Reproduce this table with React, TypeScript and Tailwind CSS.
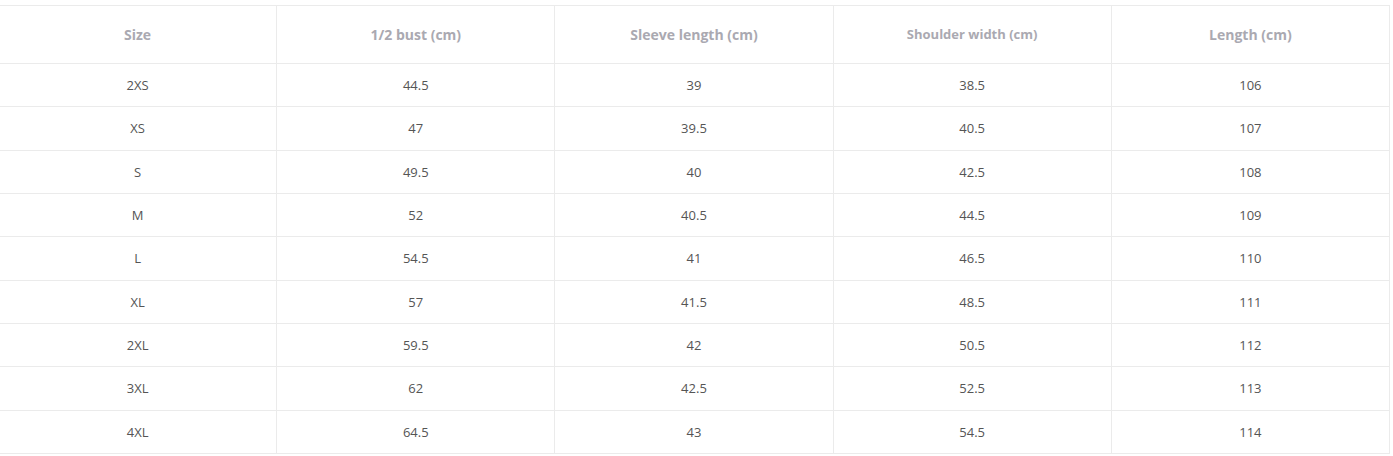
import React from 'react';

const headers = [
  { label: 'Size', size: 'text-[14px]' },
  { label: '1/2 bust (cm)', size: 'text-[14px]' },
  { label: 'Sleeve length (cm)', size: 'text-[14px]' },
  { label: 'Shoulder width (cm)', size: 'text-[13px]' },
  { label: 'Length (cm)', size: 'text-[14px]' },
];

const rows = [
  ['2XS', '44.5', '39', '38.5', '106'],
  ['XS', '47', '39.5', '40.5', '107'],
  ['S', '49.5', '40', '42.5', '108'],
  ['M', '52', '40.5', '44.5', '109'],
  ['L', '54.5', '41', '46.5', '110'],
  ['XL', '57', '41.5', '48.5', '111'],
  ['2XL', '59.5', '42', '50.5', '112'],
  ['3XL', '62', '42.5', '52.5', '113'],
  ['4XL', '64.5', '43', '54.5', '114'],
];

const App: React.FC = () => {
  return (
    <div className="w-[1393px] h-[456px] overflow-hidden bg-white pt-[5px] font-['Open_Sans',sans-serif]">
      <table className="-ml-[2px] w-[1392px] table-fixed border-collapse">
        <thead>
          <tr className="h-[58px]">
            {headers.map((h) => (
              <th
                key={h.label}
                className={`border border-[#ebebeb] ${h.size} font-bold text-[#aaa9b1] text-center align-middle`}
              >
                {h.label}
              </th>
            ))}
          </tr>
        </thead>
        <tbody>
          {rows.map((row) => (
            <tr key={row[0]} className="h-[43.33px]">
              {row.map((cell, i) => (
                <td
                  key={i}
                  className="border border-[#ebebeb] pt-px text-[13px] text-[#555555] text-center align-middle"
                >
                  {cell}
                </td>
              ))}
            </tr>
          ))}
        </tbody>
      </table>
    </div>
  );
};

export default App;
